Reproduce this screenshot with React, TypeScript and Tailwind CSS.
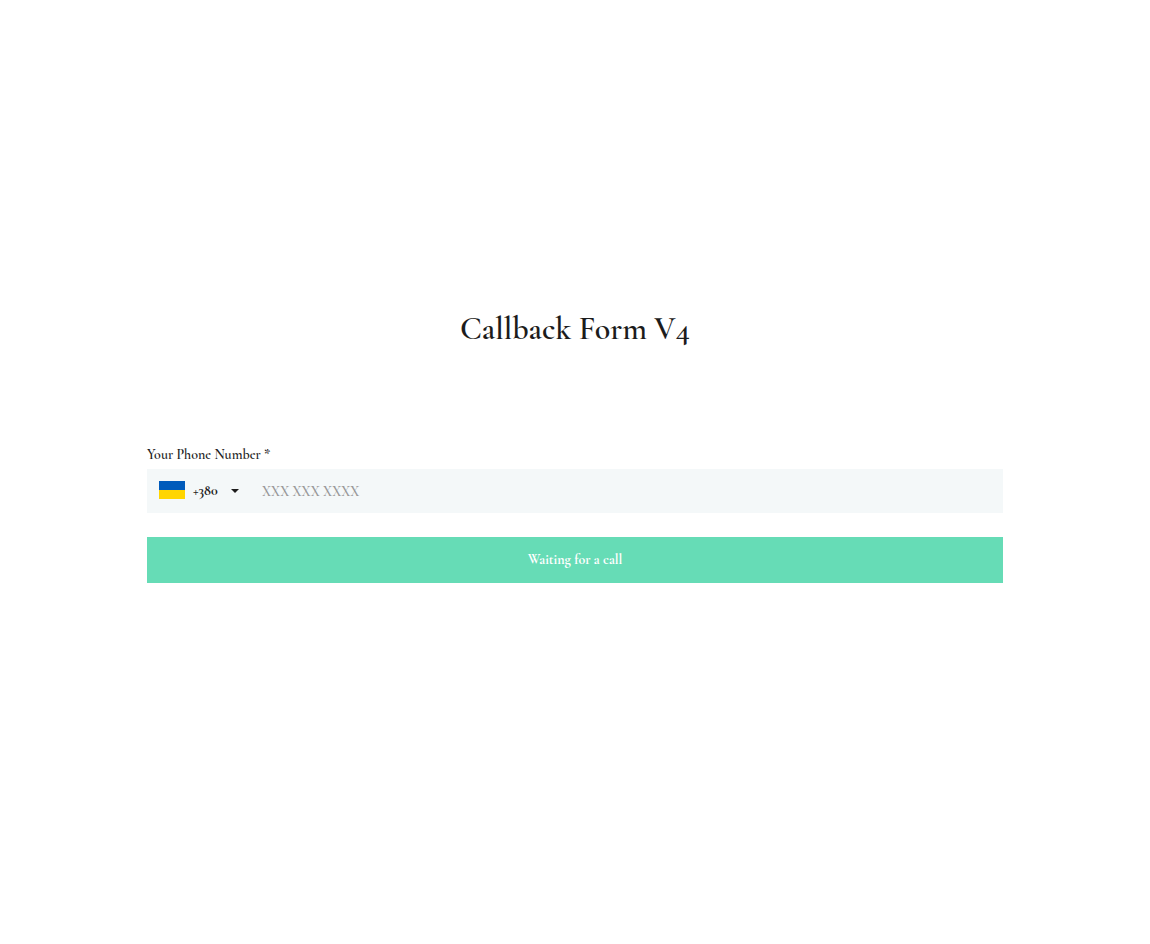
import React from "react";

export default function App() {
  return (
    <main className="flex min-h-screen flex-col items-center justify-center bg-white px-6 pb-13 font-['Cormorant_Garamond','Cormorant','Liberation_Serif',serif] text-[#1c1c1c]">
      <h1 className="text-center text-[32px] leading-10 font-semibold">Callback Form V4</h1>
      <form
        className="mt-24 flex w-full max-w-[856px] flex-col"
        onSubmit={(event) => event.preventDefault()}
      >
        <label htmlFor="phone" className="text-sm leading-5 font-semibold">
          Your Phone Number *
        </label>
        <div className="mt-1 flex h-11 items-center bg-[#f4f8f9]">
          <button
            type="button"
            aria-label="Country code +380"
            className="flex h-full items-center pr-[7px] pl-3 text-sm font-bold"
          >
            <svg width="26" height="20" viewBox="0 0 26 20" aria-hidden="true">
              <rect width="26" height="9" fill="#005bbb" />
              <rect y="9" width="26" height="9" fill="#ffd500" />
            </svg>
            <span className="ml-2 w-[38px] text-left">+380</span>
            <svg width="8" height="4" viewBox="0 0 8 4" aria-hidden="true">
              <path d="M0 0h8L4 4z" fill="#1c1c1c" />
            </svg>
          </button>
          <input
            id="phone"
            type="tel"
            placeholder="XXX XXX XXXX"
            className="h-full min-w-0 flex-1 bg-transparent px-4 text-sm font-semibold outline-none placeholder:text-[#999999]"
          />
        </div>
        <button
          type="submit"
          className="mt-6 h-[46px] bg-[#66dcb6] text-sm font-bold text-white"
        >
          Waiting for a call
        </button>
      </form>
    </main>
  );
}
